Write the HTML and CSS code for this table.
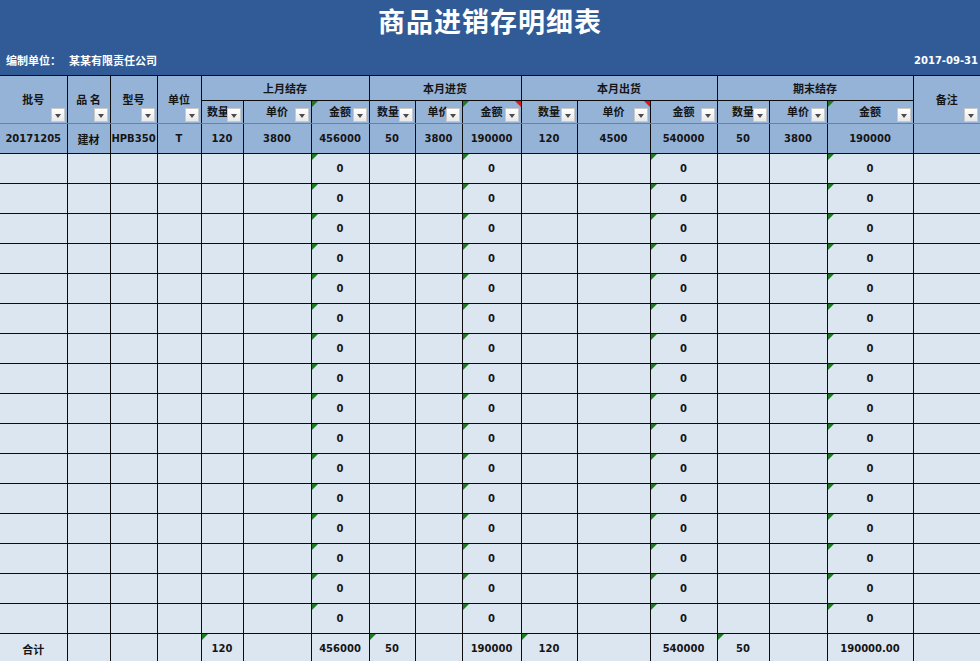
FILE: index.html
```html
<!DOCTYPE html>
<html lang="zh-CN">
<head>
<meta charset="utf-8">
<title>商品进销存明细表</title>
<link rel="stylesheet" href="styles.css">
</head>
<body>
<div class="band">
  <div class="title">商品进销存明细表</div>
  <div class="sub">
    <div class="org"><span class="lbl">编制单位：</span><span>某某有限责任公司</span></div>
    <div class="date">2017-09-31</div>
  </div>
</div>
<table class="sheet">
  <colgroup>
    <col class="w67"><col class="w43"><col class="w47"><col class="w44">
    <col class="w42"><col class="w68"><col class="w58">
    <col class="w46"><col class="w47"><col class="w59">
    <col class="w56"><col class="w73"><col class="w67">
    <col class="w52"><col class="w58"><col class="w86">
    <col class="w67">
  </colgroup>
  <thead>
    <tr class="h1">
      <th rowspan="2" class="tall">批号<i class="fb"></i></th>
      <th rowspan="2" class="tall">品 名<i class="fb"></i></th>
      <th rowspan="2" class="tall">型号<i class="fb"></i></th>
      <th rowspan="2" class="tall">单位<i class="fb"></i></th>
      <th colspan="3">上月结存</th>
      <th colspan="3">本月进货</th>
      <th colspan="3">本月出货</th>
      <th colspan="3">期末结存</th>
      <th rowspan="2" class="tall">备注<i class="fb"></i></th>
    </tr>
    <tr class="h2">
      <th><span class="shift">数量</span><i class="fb"></i></th>
      <th>单价<i class="fb"></i></th>
      <th class="tg">金额<i class="fb"></i></th>
      <th><span class="shift">数量</span><i class="fb"></i></th>
      <th>单价<i class="fb"></i></th>
      <th class="tg tr">金额<i class="fb"></i></th>
      <th>数量<i class="fb"></i></th>
      <th class="tr">单价<i class="fb"></i></th>
      <th>金额<i class="fb"></i></th>
      <th>数量<i class="fb"></i></th>
      <th>单价<i class="fb"></i></th>
      <th class="tg">金额<i class="fb"></i></th>
    </tr>
  </thead>
  <tbody>
    <tr class="first">
      <td>20171205</td><td>建材</td><td>HPB350</td><td>T</td>
      <td>120</td><td>3800</td><td>456000</td>
      <td>50</td><td>3800</td><td>190000</td>
      <td>120</td><td>4500</td><td>540000</td>
      <td>50</td><td>3800</td><td>190000</td>
      <td></td>
    </tr>
    <tr><td></td><td></td><td></td><td></td><td></td><td></td><td class="tg">0</td><td></td><td></td><td class="tg">0</td><td></td><td></td><td class="tg">0</td><td></td><td></td><td class="tg">0</td><td></td></tr>
    <tr><td></td><td></td><td></td><td></td><td></td><td></td><td class="tg">0</td><td></td><td></td><td class="tg">0</td><td></td><td></td><td class="tg">0</td><td></td><td></td><td class="tg">0</td><td></td></tr>
    <tr><td></td><td></td><td></td><td></td><td></td><td></td><td class="tg">0</td><td></td><td></td><td class="tg">0</td><td></td><td></td><td class="tg">0</td><td></td><td></td><td class="tg">0</td><td></td></tr>
    <tr><td></td><td></td><td></td><td></td><td></td><td></td><td class="tg">0</td><td></td><td></td><td class="tg">0</td><td></td><td></td><td class="tg">0</td><td></td><td></td><td class="tg">0</td><td></td></tr>
    <tr><td></td><td></td><td></td><td></td><td></td><td></td><td class="tg">0</td><td></td><td></td><td class="tg">0</td><td></td><td></td><td class="tg">0</td><td></td><td></td><td class="tg">0</td><td></td></tr>
    <tr><td></td><td></td><td></td><td></td><td></td><td></td><td class="tg">0</td><td></td><td></td><td class="tg">0</td><td></td><td></td><td class="tg">0</td><td></td><td></td><td class="tg">0</td><td></td></tr>
    <tr><td></td><td></td><td></td><td></td><td></td><td></td><td class="tg">0</td><td></td><td></td><td class="tg">0</td><td></td><td></td><td class="tg">0</td><td></td><td></td><td class="tg">0</td><td></td></tr>
    <tr><td></td><td></td><td></td><td></td><td></td><td></td><td class="tg">0</td><td></td><td></td><td class="tg">0</td><td></td><td></td><td class="tg">0</td><td></td><td></td><td class="tg">0</td><td></td></tr>
    <tr><td></td><td></td><td></td><td></td><td></td><td></td><td class="tg">0</td><td></td><td></td><td class="tg">0</td><td></td><td></td><td class="tg">0</td><td></td><td></td><td class="tg">0</td><td></td></tr>
    <tr><td></td><td></td><td></td><td></td><td></td><td></td><td class="tg">0</td><td></td><td></td><td class="tg">0</td><td></td><td></td><td class="tg">0</td><td></td><td></td><td class="tg">0</td><td></td></tr>
    <tr><td></td><td></td><td></td><td></td><td></td><td></td><td class="tg">0</td><td></td><td></td><td class="tg">0</td><td></td><td></td><td class="tg">0</td><td></td><td></td><td class="tg">0</td><td></td></tr>
    <tr><td></td><td></td><td></td><td></td><td></td><td></td><td class="tg">0</td><td></td><td></td><td class="tg">0</td><td></td><td></td><td class="tg">0</td><td></td><td></td><td class="tg">0</td><td></td></tr>
    <tr><td></td><td></td><td></td><td></td><td></td><td></td><td class="tg">0</td><td></td><td></td><td class="tg">0</td><td></td><td></td><td class="tg">0</td><td></td><td></td><td class="tg">0</td><td></td></tr>
    <tr><td></td><td></td><td></td><td></td><td></td><td></td><td class="tg">0</td><td></td><td></td><td class="tg">0</td><td></td><td></td><td class="tg">0</td><td></td><td></td><td class="tg">0</td><td></td></tr>
    <tr><td></td><td></td><td></td><td></td><td></td><td></td><td class="tg">0</td><td></td><td></td><td class="tg">0</td><td></td><td></td><td class="tg">0</td><td></td><td></td><td class="tg">0</td><td></td></tr>
    <tr><td></td><td></td><td></td><td></td><td></td><td></td><td class="tg">0</td><td></td><td></td><td class="tg">0</td><td></td><td></td><td class="tg">0</td><td></td><td></td><td class="tg">0</td><td></td></tr>
    <tr class="total">
      <td>合计</td><td></td><td></td><td></td>
      <td class="tg">120</td><td></td><td>456000</td>
      <td class="tg">50</td><td></td><td>190000</td>
      <td class="tg">120</td><td></td><td>540000</td>
      <td class="tg">50</td><td></td><td>190000.00</td>
      <td></td>
    </tr>
  </tbody>
</table>
</body>
</html>
```
FILE: styles.css
```css
html, body {
  margin: 0;
  padding: 0;
  background: #dce6f1;
  overflow: hidden;
}
body {
  width: 980px;
  height: 661px;
  font-family: "DejaVu Sans", "Noto Sans CJK SC", sans-serif;
  color: #151515;
}
.band {
  background: #315b97;
  height: 75px;
  color: #ffffff;
  display: flex;
  flex-direction: column;
}
.title {
  height: 45px;
  line-height: 42px;
  text-align: center;
  font-family: "Noto Sans CJK SC", sans-serif;
  font-weight: 700;
  font-size: 27px;
  letter-spacing: 1px;
}
.sub {
  height: 30px;
  display: flex;
  align-items: center;
  justify-content: space-between;
  padding: 0 2px 0 6px;
  font-weight: 700;
  font-size: 11px;
}
.org {
  font-family: "Noto Sans CJK SC", sans-serif;
  display: flex;
}
.lbl {
  width: 63px;
}
.date {
  font-family: "DejaVu Sans", sans-serif;
  font-size: 10px;
}
.sheet {
  border-collapse: collapse;
  table-layout: fixed;
  width: 980px;
  margin-top: 0;
}
.w42 { width: 42px; } .w43 { width: 43px; } .w44 { width: 44px; }
.w46 { width: 46px; } .w47 { width: 47px; } .w52 { width: 52px; }
.w56 { width: 56px; } .w58 { width: 58px; } .w59 { width: 59px; }
.w67 { width: 67px; } .w68 { width: 68px; } .w73 { width: 73px; }
.w86 { width: 86px; }
.sheet th, .sheet td {
  border: 1px solid #0d0d0d;
  padding: 0;
  text-align: center;
  white-space: nowrap;
  overflow: hidden;
  position: relative;
}
.sheet tr > :first-child { border-left: none; }
.sheet tr > :last-child { border-right: none; }
.sheet .h2 > :first-child { border-left: 1px solid #0d0d0d; }
.sheet .h2 > :last-child { border-right: 1px solid #0d0d0d; }
.sheet th {
  background: #95b3d7;
  font-family: "Noto Sans CJK SC", sans-serif;
  font-weight: 700;
  font-size: 11px;
}
.h1 th { height: 23px; padding-bottom: 1px; }
.h1 th.tall { padding-bottom: 2px; }
.h2 th {
  height: 20px;
  border-bottom: 1px solid #52a13e;
  padding-bottom: 2px;
}
.h1 th.tall { border-bottom: 1px solid #52a13e; }
.shift {
  display: inline-block;
  position: relative;
  left: -4px;
}
.sheet td {
  height: 29px;
  font-size: 10px;
  font-weight: 700;
  background: #dce6f1;
}
.sheet tr.first td {
  background: #95b3d7;
}
.sheet tr.first td:nth-child(2),
.sheet tr.total td:first-child {
  font-family: "Noto Sans CJK SC", sans-serif;
  font-size: 11px;
}
.fb {
  position: absolute;
  right: 2px;
  bottom: 1px;
  width: 12px;
  height: 12px;
  background: linear-gradient(#ffffff, #e9e9e9);
  border: 1px solid #c9c9c9;
}
.fb::after {
  content: "";
  position: absolute;
  left: 3px;
  top: 5px;
  border-left: 3.5px solid transparent;
  border-right: 3.5px solid transparent;
  border-top: 4px solid #4a4a4a;
}
.tg::before {
  content: "";
  position: absolute;
  left: 0;
  top: 0;
  border-top: 6px solid #1d7a23;
  border-right: 6px solid transparent;
}
.tr::after {
  content: "";
  position: absolute;
  right: 0;
  top: 0;
  border-top: 6px solid #e3141a;
  border-left: 6px solid transparent;
}
```
